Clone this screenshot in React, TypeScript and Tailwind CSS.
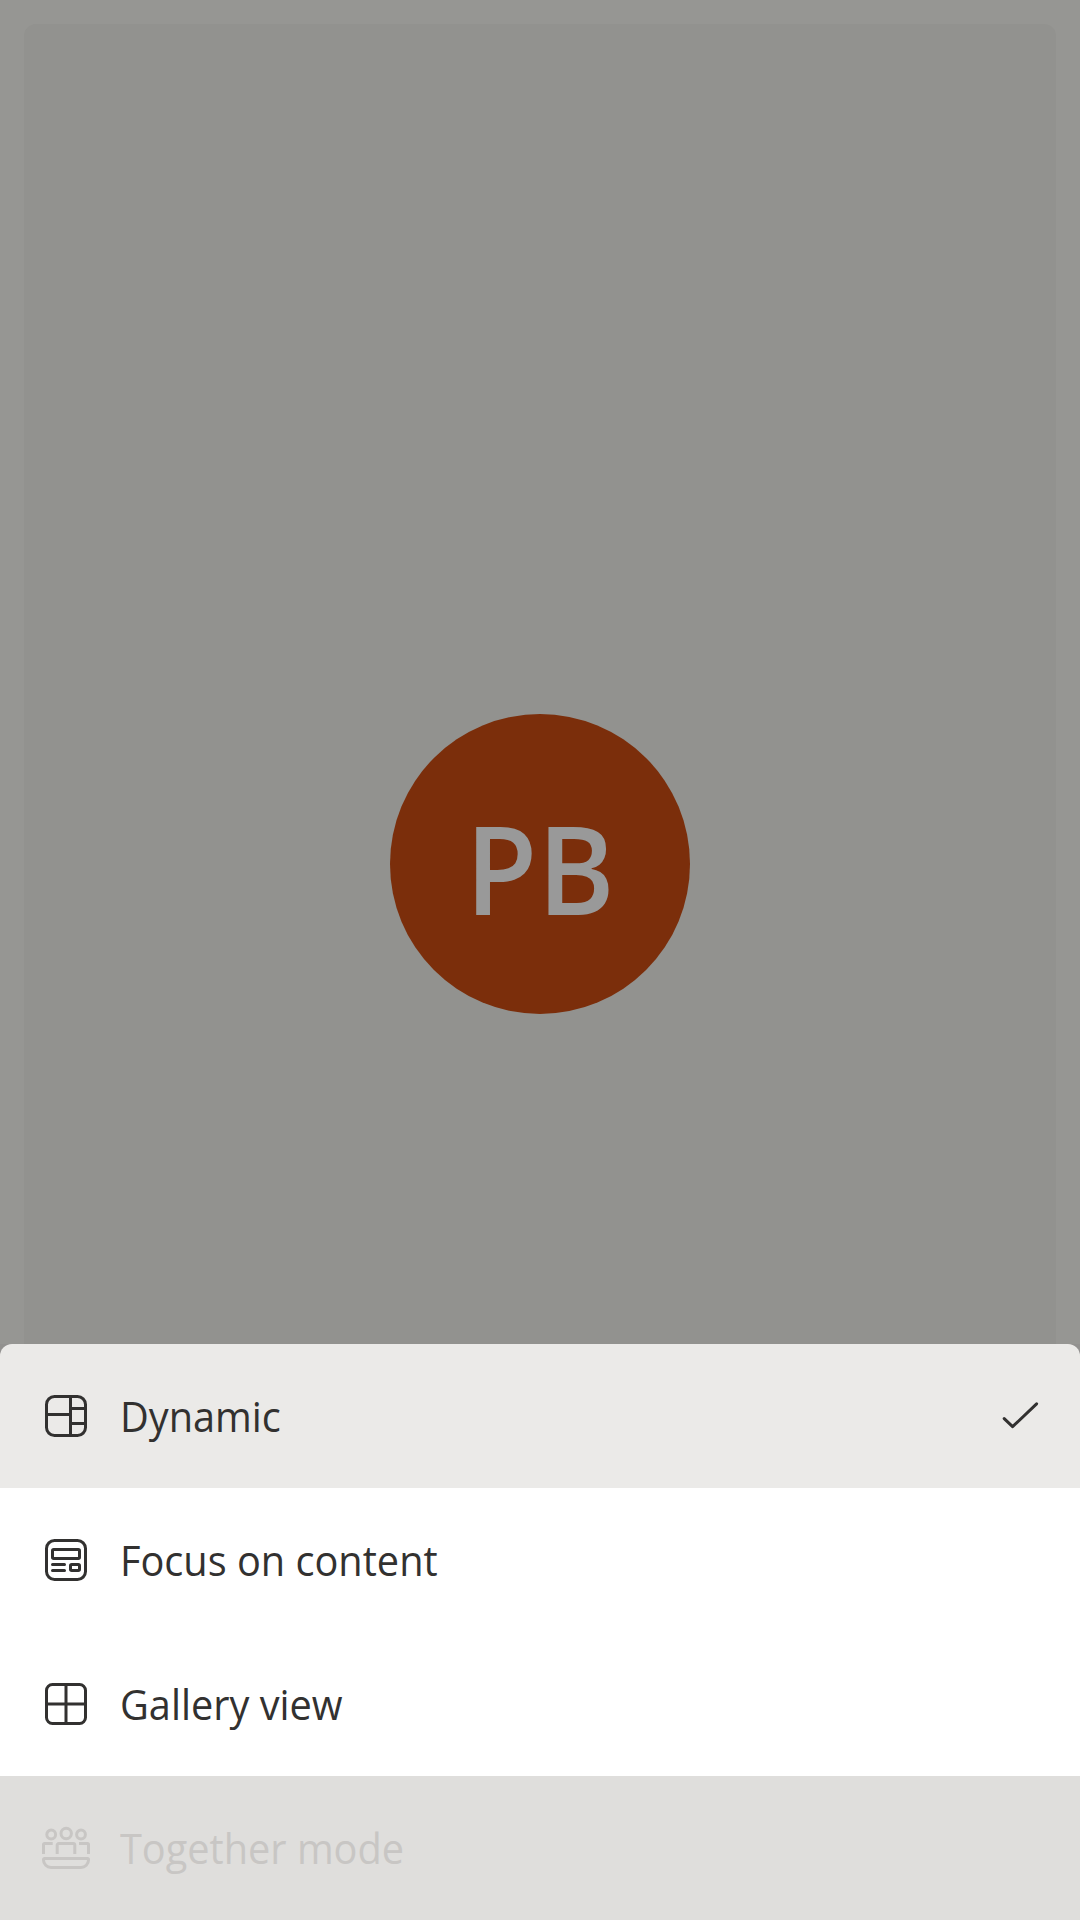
import type { ReactNode } from "react";

function Icon({ children }: { children: ReactNode }) {
  return (
    <svg
      viewBox="0 0 48 48"
      className="size-12 shrink-0 overflow-visible"
      fill="none"
      stroke="currentColor"
      strokeWidth={3}
      strokeLinecap="round"
      strokeLinejoin="round"
      aria-hidden="true"
    >
      {children}
    </svg>
  );
}

function DynamicIcon() {
  return (
    <Icon>
      <rect x="4.5" y="4.5" width="39" height="39" rx="8" />
      <path d="M28.5 4.5v39M4.5 22.5h24M28.5 16.5h15M28.5 31.5h15" />
    </Icon>
  );
}

function FocusIcon() {
  return (
    <Icon>
      <rect x="4.5" y="4.5" width="39" height="39" rx="8" />
      <rect x="10.5" y="13.5" width="27" height="9" rx="1.2" />
      <rect x="28.5" y="28.5" width="9" height="6" rx="1.2" />
      <path d="M10.5 28.5h12M10.5 34.5h12" />
    </Icon>
  );
}

function GalleryIcon() {
  return (
    <Icon>
      <rect x="4.5" y="4.5" width="39" height="39" rx="6" />
      <path d="M24 4.5v39M4.5 24h39" />
    </Icon>
  );
}

function TogetherIcon() {
  return (
    <Icon>
      <circle cx="9.2" cy="10.5" r="4.4" />
      <circle cx="24.2" cy="9.5" r="5.2" />
      <circle cx="39" cy="10.5" r="4.4" />
      <g strokeLinecap="butt">
        <path d="M1.5 30V20.5a1 1 0 0 1 1-1h8.2M46.5 30V20.5a1 1 0 0 0-1-1H37" />
        <path d="M15.2 30V21a1.5 1.5 0 0 1 1.5-1.5h14.6a1.5 1.5 0 0 1 1.5 1.5v9" />
      </g>
      <path d="M2.5 34.5h43a1 1 0 0 1 1 1V36a7.5 7.5 0 0 1-7.5 7.5H9A7.5 7.5 0 0 1 1.5 36v-.5a1 1 0 0 1 1-1z" />
    </Icon>
  );
}

function CheckIcon() {
  return (
    <Icon>
      <path d="M14.2 26.6l8.4 8.1L46.6 11.8" />
    </Icon>
  );
}

type RowProps = { icon: ReactNode; label: string; className: string; checked?: boolean };

function Row({ icon, label, className, checked }: RowProps) {
  return (
    <li className={`flex h-36 items-center px-[42px] ${className}`}>
      {icon}
      <span className="ml-[30px] flex-1 origin-left scale-x-[0.945] text-[42px] leading-none whitespace-nowrap">
        {label}
      </span>
      {checked && <CheckIcon />}
    </li>
  );
}

export default function App() {
  return (
    <div className="flex h-[1920px] w-[1080px] flex-col overflow-hidden bg-[#92918f] font-['Open_Sans','Noto_Sans',sans-serif]">
      <main className="flex h-[1344px] flex-col bg-[#969693] px-6 pt-6">
        <section className="flex flex-1 flex-col items-center rounded-t-xl bg-[#92928f] pt-[690px]">
          <div className="flex size-[300px] items-center justify-center rounded-full bg-[#7b2e0b] text-[#999999]">
            <span className="scale-x-[0.945] pt-[5px] text-[124px] leading-none font-semibold">PB</span>
          </div>
        </section>
      </main>
      <ul className="overflow-hidden rounded-t-xl text-[#323130]">
        <Row icon={<DynamicIcon />} label="Dynamic" className="bg-[#ebeae8]" checked />
        <Row icon={<FocusIcon />} label="Focus on content" className="bg-white" />
        <Row icon={<GalleryIcon />} label="Gallery view" className="bg-white" />
        <Row icon={<TogetherIcon />} label="Together mode" className="bg-[#dfdedc] text-[#c8c6c4]" />
      </ul>
    </div>
  );
}
